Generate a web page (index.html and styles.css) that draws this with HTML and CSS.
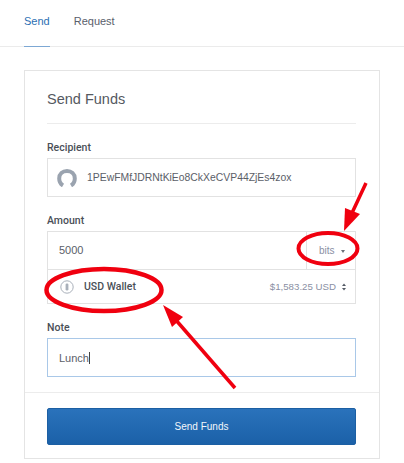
FILE: index.html
```html
<!DOCTYPE html>
<html lang="en">

<head>
    <meta charset="UTF-8">
    <meta name="viewport" content="width=device-width, initial-scale=1.0">
    <title>Send Funds</title>
    <link rel="stylesheet" href="styles.css">
</head>

<body>
    <nav class="tabs">
        <a class="tab active">Send</a>
        <a class="tab">Request</a>
    </nav>

    <main class="card">
        <div class="card-body">
            <h2>Send Funds</h2>

            <label>Recipient</label>
            <div class="field recipient">
                <svg class="avatar" width="20" height="18" viewBox="0 0 20 18">
                    <path d="M6 16.5 C3.5 15 2.2 12.5 2.2 9.5 C2.2 4.8 5.6 2 10 2 C14.4 2 17.8 4.8 17.8 9.5 C17.8 12.5 16.5 15 14 16.5" fill="none" stroke="#9aa3af" stroke-width="4" />
                </svg>
                <span>1PEwFMfJDRNtKiEo8CkXeCVP44ZjEs4zox</span>
            </div>

            <label>Amount</label>
            <div class="amount">
                <div class="amount-top">
                    <span class="amount-value">5000</span>
                    <span class="unit">bits <i class="caret"></i></span>
                </div>
                <div class="wallet">
                    <svg width="14" height="14" viewBox="0 0 14 14">
                        <circle cx="7" cy="7" r="6.2" fill="none" stroke="#a9b0ba" stroke-width="1" />
                        <rect x="5.6" y="3.6" width="2.8" height="6.8" rx="1.2" fill="#a9b0ba" />
                    </svg>
                    <span class="wallet-name">USD Wallet</span>
                    <span class="balance">$1,583.25 USD</span>
                    <svg class="updown" width="4" height="8" viewBox="0 0 5 9">
                        <path d="M2.5 0 L5 3.2 L0 3.2 Z M2.5 9 L5 5.8 L0 5.8 Z" fill="#555c66" />
                    </svg>
                </div>
            </div>

            <label>Note</label>
            <div class="field note"><span>Lunch</span><i class="cursor"></i></div>
        </div>

        <div class="card-footer">
            <button type="button">Send Funds</button>
        </div>
    </main>

    <!-- red marks drawn on top of the screenshot -->
    <svg class="marks" width="404" height="463" viewBox="0 0 404 463">
        <ellipse cx="328" cy="248.5" rx="29.5" ry="15.5" fill="none" stroke="#f0000f" stroke-width="4" />
        <ellipse cx="104" cy="290" rx="57.5" ry="21" fill="none" stroke="#f0000f" stroke-width="4.5" />
        <path d="M366 183 L352 213" stroke="#f0000f" stroke-width="3.5" fill="none" />
        <path d="M344 231 L345 208 L360 214 Z" fill="#f0000f" />
        <path d="M235 388 L175 319" stroke="#f0000f" stroke-width="3.5" fill="none" />
        <path d="M163 305 L183 317 L172 327 Z" fill="#f0000f" />
    </svg>
</body>

</html>
```

FILE: styles.css
```css
* {
    box-sizing: border-box;
}

body {
    font-family: "Liberation Sans", Arial, sans-serif;
    background-color: #fff;
    color: #4a4f57;
    margin: 0;
    width: 404px;
    height: 463px;
    overflow: hidden;
    position: relative;
}

.tabs {
    display: flex;
    gap: 24px;
    height: 47px;
    padding-left: 24px;
    border-bottom: 1px solid #ebebeb;
}

.tab {
    font-size: 11px;
    line-height: 14px;
    padding-top: 14px;
    color: #59606b;
}

.tab.active {
    color: #2b6fb3;
    border-bottom: 1px solid #7da8d4;
    height: 47px;
}

.card {
    margin: 23px 0 0 24px;
    width: 356px;
    height: 389px;
    border: 1px solid #e4e4e4;
}

.card-body {
    padding: 0 23px 0 22px;
    height: 322px;
    border-bottom: 1px solid #ececec;
}

h2 {
    margin: 0 0 18px;
    height: 53px;
    padding-top: 19px;
    font-size: 14.5px;
    line-height: 18px;
    font-weight: normal;
    color: #55595f;
    border-bottom: 1px solid #ececec;
}

label {
    display: block;
    font-family: Roboto, "Liberation Sans", sans-serif;
    font-size: 10.5px;
    line-height: 12px;
    margin-bottom: 4px;
    color: #4a4f57;
    font-weight: 500;
}

.field {
    height: 39px;
    margin-bottom: 18px;
    border: 1px solid #e2e2e2;
    display: flex;
    align-items: center;
    font-size: 11px;
    color: #5b6068;
}

.recipient {
    padding-left: 9px;
    gap: 10px;
    font-size: 10.4px;
}

.amount {
    border: 1px solid #e2e2e2;
    height: 73px;
    margin-bottom: 18px;
    font-size: 11px;
}

.amount-top {
    display: flex;
    height: 38px;
    border-bottom: 1px solid #e2e2e2;
}

.amount-value {
    flex: 1;
    padding: 12px 0 0 11px;
    color: #5b6068;
}

.unit {
    width: 49px;
    padding: 13px 0 0 12px;
    border-left: 1px solid #e2e2e2;
    font-size: 10px;
    color: #8a8fa3;
}

.caret {
    display: inline-block;
    width: 0;
    height: 0;
    margin: 0 0 1px 4px;
    border-left: 2px solid transparent;
    border-right: 2px solid transparent;
    border-top: 3px solid #6b7078;
}

.wallet {
    display: flex;
    align-items: center;
    height: 33px;
    padding: 0 9px 0 12px;
}

.wallet-name {
    margin-left: 10px;
    font-family: Roboto, "Liberation Sans", sans-serif;
    font-size: 10.5px;
    font-weight: 500;
    color: #4a4f57;
}

.balance {
    margin-left: auto;
    margin-right: 6px;
    font-size: 9.7px;
    color: #8a8fa3;
}

.note {
    margin-bottom: 0;
    padding-left: 11px;
    border-color: #a9c8e8;
}

.cursor {
    width: 1px;
    height: 12px;
    background-color: #444;
}

.card-footer {
    padding: 15px 23px 0 22px;
}

button {
    display: block;
    width: 100%;
    height: 37px;
    background-image: linear-gradient(#2a72bb, #1b61a8);
    border: 1px solid #1c5fa3;
    border-radius: 2px;
    color: #f2f6fb;
    font-family: inherit;
    font-size: 10px;
}

.marks {
    position: absolute;
    left: 0;
    top: 0;
}
```
